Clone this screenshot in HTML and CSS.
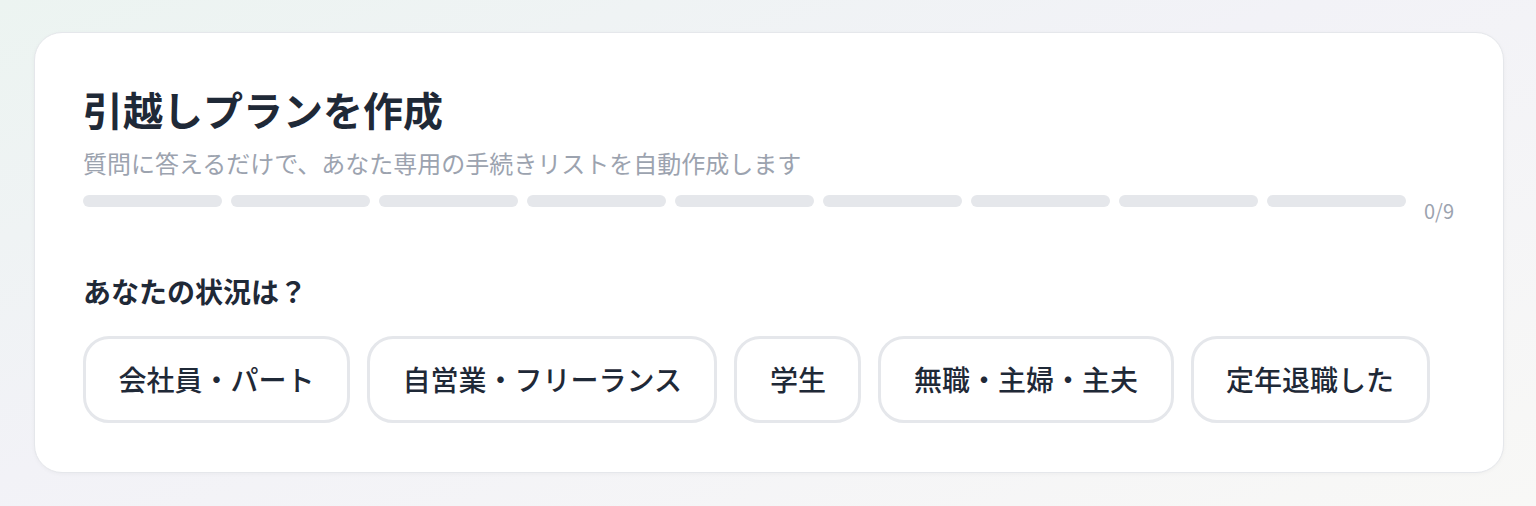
FILE: index.html
```html
<!DOCTYPE html>
<html lang="ja">
<head>
    <meta charset="utf-8">
    <title>引越しプランを作成</title>
    <link rel="stylesheet" href="styles.css">
</head>
<body>

    <div class="page">
        <div class="card">
            <h1 class="title">引越しプランを作成</h1>
            <p class="subtitle">質問に答えるだけで、あなた専用の手続きリストを自動作成します</p>

            <div class="progress">
                <div class="bars">
                    <span class="bar"></span>
                    <span class="bar"></span>
                    <span class="bar"></span>
                    <span class="bar"></span>
                    <span class="bar"></span>
                    <span class="bar"></span>
                    <span class="bar"></span>
                    <span class="bar"></span>
                    <span class="bar"></span>
                </div>
                <span class="count">0/9</span>
            </div>

            <div class="question">あなたの状況は？</div>
            <div class="options">
                <button type="button" class="option">会社員・パート</button>
                <button type="button" class="option">自営業・フリーランス</button>
                <button type="button" class="option">学生</button>
                <button type="button" class="option">無職・主婦・主夫</button>
                <button type="button" class="option">定年退職した</button>
            </div>
        </div>
    </div>

</body>
</html>
```

FILE: styles.css
```css
body {
  margin: 0;
  height: 506px;
  font-family: "Noto Sans CJK JP", "Noto Sans", sans-serif;
  color: #1f2937;
  background: linear-gradient(160deg, #ecf4f1 0%, #f2f2f7 45%, #f8f8f6 100%);
}

.page {
  padding: 32px 32px 32px 34px;
}

.card {
  background-color: #fff;
  border: 1px solid #e5e7eb;
  border-radius: 28px;
  box-shadow: 0 1px 4px rgba(0, 0, 0, 0.04);
  padding: 48px 48px 49px;
}

.title {
  margin: 0;
  font-size: 40px;
  font-weight: 700;
  line-height: 56px;
  color: #1f2937;
}

.subtitle {
  margin: 8px 0 0;
  font-size: 24px;
  line-height: 36px;
  color: #9ca3af;
}

.progress {
  display: flex;
  align-items: flex-start;
  gap: 18px;
  margin-top: 14px;
}

.bars {
  display: flex;
  gap: 9px;
}

.bar {
  width: 139px;
  height: 12px;
  border-radius: 6px;
  background-color: #e5e7eb;
}

.count {
  font-size: 20px;
  line-height: 32px;
  color: #9ca3af;
}

.question {
  margin-top: 45px;
  font-size: 28px;
  font-weight: 700;
  line-height: 38px;
}

.options {
  display: flex;
  gap: 17px;
  margin-top: 26px;
}

.option {
  font-family: inherit;
  font-size: 28px;
  font-weight: 500;
  line-height: 43px;
  color: #1f2937;
  background-color: #fff;
  border: 3px solid #e5e7eb;
  border-radius: 26px;
  padding: 19px 32.5px;
  cursor: pointer;
}
```
